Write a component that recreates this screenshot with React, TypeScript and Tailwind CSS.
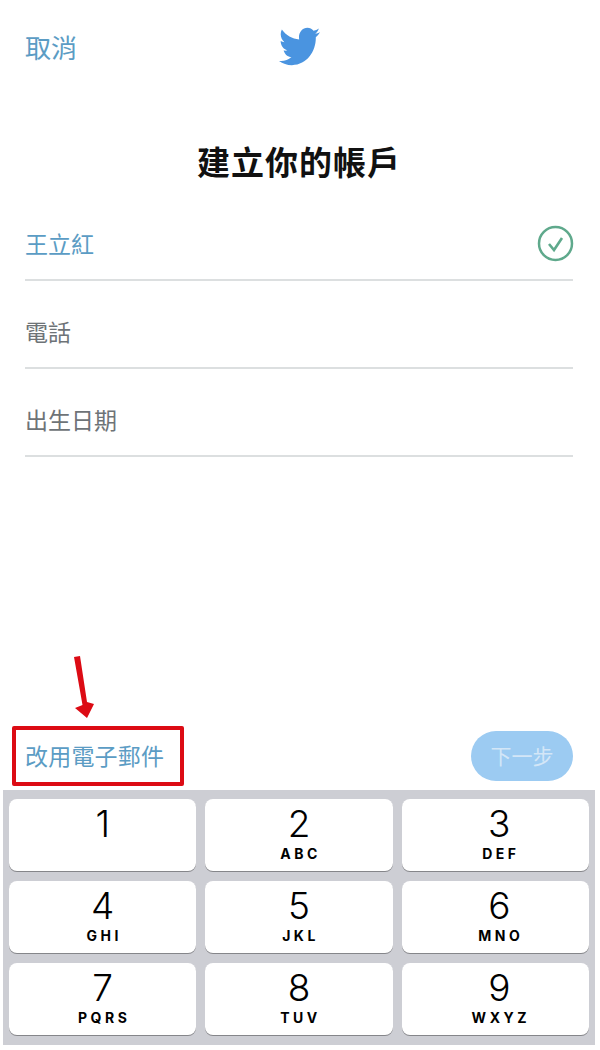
import { FaTwitter } from "react-icons/fa"

const cjk = "font-['Noto_Sans_CJK_TC','Noto_Sans_CJK_SC',sans-serif]"

const keys = [
  { n: "1", l: "" },
  { n: "2", l: "ABC" },
  { n: "3", l: "DEF" },
  { n: "4", l: "GHI" },
  { n: "5", l: "JKL" },
  { n: "6", l: "MNO" },
  { n: "7", l: "PQRS" },
  { n: "8", l: "TUV" },
  { n: "9", l: "WXYZ" },
]

function Field({ label, active, check }: { label: string; active?: boolean; check?: boolean }) {
  return (
    <div className="flex h-[88px] items-center justify-between border-b-2 border-[#dcdfe0] pt-[14px]">
      <span className={`text-[23px] ${active ? "text-[#5b9cc4]" : "text-[#6e7377]"}`}>{label}</span>
      {check && (
        <svg width="37" height="37" viewBox="0 0 37 37" fill="none" stroke="#5fa98c" className="-mr-[1px]">
          <circle cx="18.5" cy="18.5" r="16.5" strokeWidth="2.5" />
          <path d="M12 19l5 6 8-12" strokeWidth="2.6" />
        </svg>
      )}
    </div>
  )
}

export default function App() {
  return (
    <div className={`relative flex h-[1050px] w-[600px] flex-col overflow-hidden bg-white ${cjk}`}>
      {/* top bar */}
      <div className="relative flex h-[96px] items-center px-[25px]">
        <span className="pb-[3px] text-[26px] text-[#5b9cc4]">取消</span>
        <FaTwitter className="absolute left-[279px] top-[26px] h-[41px] w-[41px] scale-y-[1.12] text-[#4a94e0]" />
      </div>

      <h1 className="mt-[40px] pr-[2px] text-center text-[33px] leading-[50px] font-bold tracking-[1px] text-[#111]">建立你的帳戶</h1>

      <div className="mt-[7px] flex flex-col pl-[25px] pr-[27px]">
        <Field label="王立紅" active check />
        <Field label="電話" />
        <Field label="出生日期" />
      </div>

      <div className="flex-1" />

      {/* bottom actions */}
      <div className="flex items-end justify-between pl-[12px] pr-[27px] pb-[4px]">
        <div className="flex h-[60px] w-[172px] items-center rounded-[2px] border-[4px] border-[#dc0b14] pb-[2px] pl-[9px] text-[23px] tracking-[0.2px] text-[#5b9cc4]">
          改用電子郵件
        </div>
        <button className="mb-[5px] h-[50px] w-[102px] rounded-full bg-[#9ccbf2] text-[21px] text-[#d3e6f7]">下一步</button>
      </div>

      {/* keypad */}
      <div className="mb-[5px] ml-[3px] mr-[5px] grid grid-cols-3 gap-x-[9px] gap-y-[10px] bg-[#cdced4] px-[6px] pt-[9px] pb-[10px]">
        {keys.map((k, i) => (
          <div
            key={k.n}
            className={`flex h-[72px] flex-col items-center rounded-[8px] bg-white font-['Inter',sans-serif] text-black shadow-[0_1px_0_#85868a] ${
              i % 3 === 2 ? "pl-[8px]" : ""
            }`}
          >
            <span className="mt-[3px] text-[37px] leading-[44px] font-light">{k.n}</span>
            <span className="pl-[3px] text-[14px] leading-[16px] font-bold tracking-[3.5px]">{k.l}</span>
          </div>
        ))}
      </div>

      {/* annotation arrow */}
      <svg className="absolute left-[70px] top-[652px]" width="30" height="72" viewBox="0 0 30 72" fill="#dc0b14">
        <path d="M4 5L10 4L17 50L24 52L17 66L5 56L12.5 53Z" />
      </svg>
    </div>
  )
}
